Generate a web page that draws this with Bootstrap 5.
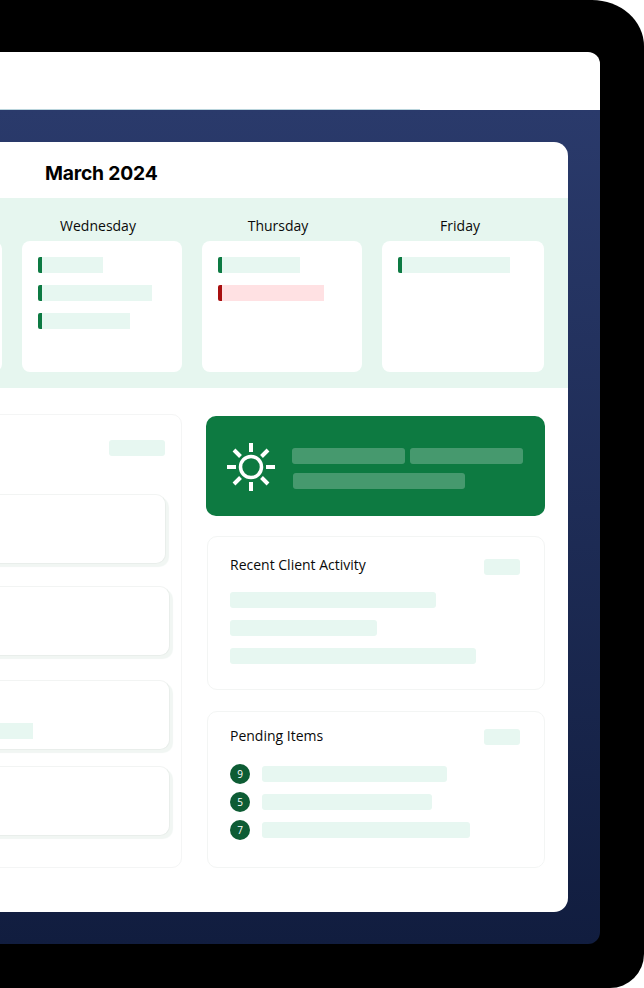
<!DOCTYPE html>
<html lang="en">
<head>
  <meta charset="UTF-8" />
  <meta name="viewport" content="width=device-width, initial-scale=1.0" />
  <title>March 2024</title>
  <link href="https://cdn.jsdelivr.net/npm/bootstrap@5.3.0/dist/css/bootstrap.min.css" rel="stylesheet" />
  <style>
    html, body { height: 988px; overflow: hidden; background: #fff; }
    body { font-family: "Open Sans", "Liberation Sans", sans-serif; font-size: 14px; color: #0a0a0a; }
    .device { width: 644px; height: 988px; background: #000; padding: 52px 44px 44px 0; border-radius: 0 52px 34px 0 / 0 46px 34px 0; }
    .screen { height: 892px; border-radius: 0 12px 12px 0; overflow: hidden; }
    .topbar { height: 58px; background: #fff; }
    .topline { width: 420px; height: 1px; background: #b9d4dc; }
    .stage { flex: 1; padding: 32px 32px 32px 0; background: linear-gradient(#2a3a6b, #111d3f); }
    .sheet { height: 770px; background: #fff; border-radius: 0 14px 14px 0; overflow: hidden; }
    .sheet-head { height: 56px; padding: 6px 0 0 45px; }
    .month { font-family: Inter, "Liberation Sans", sans-serif; font-size: 19.3px; font-weight: 700; letter-spacing: -.2px; color: #000; }
    .week { height: 190px; background: #e6f6ef; padding-top: 18px; margin-left: -158px; gap: 20px; }
    .daycol { width: 160px; flex: none; }
    .daycol.last { width: 162px; }
    .dayname { height: 20px; line-height: 20px; margin-bottom: 5px; text-align: center; padding-right: 8px; }
    .daycol.last .dayname { padding-right: 6px; }
    .daybox { height: 131px; padding: 16px; gap: 12px; border: 0; border-radius: 8px; }
    .evt { height: 16px; background: #e7f7f1; border-left: 4px solid #0d7a43; border-radius: 2px 0 0 2px; }
    .evt.alert-evt { background: #ffe1e3; border-left-color: #a80f0f; }
    .lower { padding-top: 26px; margin-left: -200px; gap: 24px; }
    .leftpanel { width: 382px; height: 454px; flex: none; padding: 25px 11px 0 20px; border: 1px solid #f4f5f5; border-radius: 10px; }
    .pill { width: 56px; height: 16px; background: #e7f7f1; border-radius: 3px; }
    .pill.wide { margin-right: 5px; }
    .pill.tiny { width: 36px; }
    .taskbox { height: 70px; background: #fff; border: 1px solid #f2f4f3; border-bottom-color: #e9eeeb; border-right-color: #e9eeeb; border-radius: 10px; box-shadow: 3px 3px 1px #f1f6f3; }
    .t1 { margin-top: 38px; margin-right: 4px; }
    .t2 { margin-top: 22px; }
    .t3 { margin-top: 24px; padding-top: 42px; }
    .t4 { margin-top: 16px; }
    .t3 .fillbar { width: 211px; height: 16px; background: #e7f7f1; }
    .rightcol { width: 339px; flex: none; }
    .banner { height: 100px; background: #0d7a41; border-radius: 10px; padding: 0 20px; gap: 16px; margin-top: 2px; }
    .bannersun { margin-top: 2px; }
    .bannertext { padding-top: 5px; }
    .ghostrow { gap: 5px; margin-bottom: 9px; }
    .ghost { height: 16px; background: rgba(255,255,255,.24); border-radius: 3px; }
    .ghost.nudge { margin-left: 1px; }
    .infobox { margin-left: 1px; padding-right: 24px; padding-left: 22px; border: 1px solid #f3f5f4; border-radius: 10px; background: #fff; }
    .recent { height: 154px; margin-top: 20px; padding-top: 19px; }
    .pending { height: 157px; margin-top: 21px; padding-top: 14px; }
    .boxhead { height: 22px; }
    .recent .boxhead { margin-bottom: 14px; }
    .pending .boxhead { margin-bottom: 18px; }
    .boxtitle { font-size: 14px; line-height: 20px; }
    .recent .boxtitle { margin-bottom: 4px; }
    .pending .boxtitle { margin-bottom: 2px; }
    .softbar { height: 16px; background: #e7f7f1; border-radius: 3px; }
    .barstack { gap: 12px; }
    .numdot { width: 20px; height: 20px; flex: none; background: #0d5c34; color: #fff; border-radius: 50%; font-size: 10px; }
    .pendrow { height: 16px; gap: 12px; }
  </style>
</head>
<body>
  <div class="device">
    <div class="screen d-flex flex-column">
      <div class="topbar d-flex flex-column justify-content-end">
        <div class="topline"></div>
      </div>
      <div class="stage">
        <div class="sheet">
          <div class="sheet-head d-flex align-items-center">
            <div class="month">March 2024</div>
          </div>

          <div class="week d-flex">
            <div class="daycol">
              <div class="dayname"></div>
              <div class="card daybox"></div>
            </div>
            <div class="daycol">
              <div class="dayname">Wednesday</div>
              <div class="card daybox">
                <div class="evt" style="width: 65px"></div>
                <div class="evt" style="width: 114px"></div>
                <div class="evt" style="width: 92px"></div>
              </div>
            </div>
            <div class="daycol">
              <div class="dayname">Thursday</div>
              <div class="card daybox">
                <div class="evt" style="width: 82px"></div>
                <div class="evt alert-evt" style="width: 106px"></div>
              </div>
            </div>
            <div class="daycol last">
              <div class="dayname">Friday</div>
              <div class="card daybox">
                <div class="evt" style="width: 112px"></div>
              </div>
            </div>
          </div>

          <div class="lower d-flex">
            <div class="leftpanel">
              <div class="d-flex justify-content-end"><div class="pill wide"></div></div>
              <div class="taskbox t1"></div>
              <div class="taskbox t2"></div>
              <div class="taskbox t3"><div class="fillbar"></div></div>
              <div class="taskbox t4"></div>
            </div>

            <div class="rightcol">
              <div class="banner d-flex align-items-center">
                <svg width="50" height="50" viewBox="0 0 50 50" fill="none" stroke="#fff" class="bannersun flex-shrink-0">
                  <circle cx="25" cy="25" r="10.5" stroke-width="3.5" />
                  <path stroke-width="4" d="M25 1v9M25 40v9M1 25h9M40 25h9M8 8l6.500 6.500M35.500 35.500l6.500 6.500M42 8l-6.500 6.500M14.500 35.500L8 42" />
                </svg>
                <div class="bannertext flex-grow-1">
                  <div class="ghostrow d-flex">
                    <div class="ghost" style="width: 113px"></div>
                    <div class="ghost" style="width: 113px"></div>
                  </div>
                  <div class="ghost nudge" style="width: 172px"></div>
                </div>
              </div>

              <div class="infobox recent">
                <div class="boxhead d-flex justify-content-between align-items-center">
                  <div class="boxtitle">Recent Client Activity</div>
                  <div class="pill tiny"></div>
                </div>
                <div class="barstack d-flex flex-column">
                  <div class="softbar" style="width: 206px"></div>
                  <div class="softbar" style="width: 147px"></div>
                  <div class="softbar" style="width: 246px"></div>
                </div>
              </div>

              <div class="infobox pending">
                <div class="boxhead d-flex justify-content-between align-items-center">
                  <div class="boxtitle">Pending Items</div>
                  <div class="pill tiny"></div>
                </div>
                <div class="barstack d-flex flex-column">
                  <div class="pendrow d-flex align-items-center">
                    <div class="numdot d-flex align-items-center justify-content-center">9</div>
                    <div class="softbar" style="width: 185px"></div>
                  </div>
                  <div class="pendrow d-flex align-items-center">
                    <div class="numdot d-flex align-items-center justify-content-center">5</div>
                    <div class="softbar" style="width: 170px"></div>
                  </div>
                  <div class="pendrow d-flex align-items-center">
                    <div class="numdot d-flex align-items-center justify-content-center">7</div>
                    <div class="softbar" style="width: 208px"></div>
                  </div>
                </div>
              </div>
            </div>
          </div>
        </div>
      </div>
    </div>
  </div>
  <script src="https://cdn.jsdelivr.net/npm/bootstrap@5.3.0/dist/js/bootstrap.bundle.min.js"></script>
</body>
</html>
